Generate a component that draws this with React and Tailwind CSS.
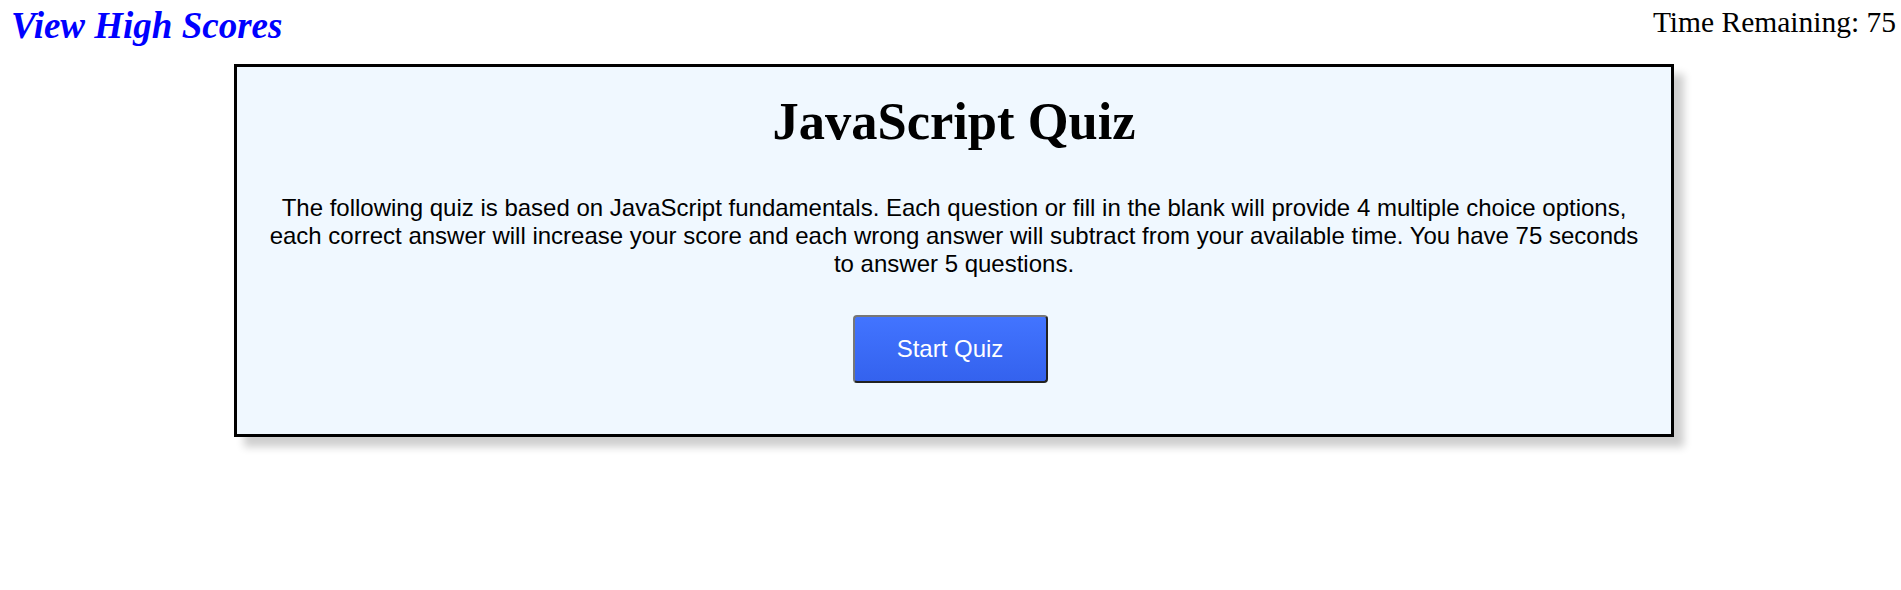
import React from 'react';

export default function App() {
    return (
        <div className="min-h-[590px] bg-white">
            <header className="flex items-start justify-between pl-[11px] pr-[5px] pt-[5px]">
                <a
                    href="#"
                    className="text-[37px] leading-[42px] font-bold italic text-[#0000ff]"
                    style={{ fontFamily: '"Liberation Serif", serif' }}
                >
                    View High Scores
                </a>
                <div
                    className="text-[29.5px] leading-[34px] text-black"
                    style={{ fontFamily: '"Liberation Serif", serif' }}
                >
                    Time Remaining: 75
                </div>
            </header>

            <main className="mt-[17px] flex justify-center">
                <section className="ml-[7px] w-[1440px] border-[3px] border-black bg-[#f0f8ff] pt-[22px] pb-[51px] shadow-[10px_10px_8px_#cfcfcf]">
                    <h1
                        className="text-center text-[52.5px] leading-[64px] font-bold text-black"
                        style={{ fontFamily: '"Liberation Serif", serif' }}
                    >
                        JavaScript Quiz
                    </h1>
                    <p
                        className="mt-[41px] px-[22px] text-center text-[24px] leading-[28px] text-black"
                        style={{ fontFamily: '"Liberation Sans", Arial, sans-serif' }}
                    >
                        The following quiz is based on JavaScript fundamentals. Each question or fill in the blank will provide 4 multiple choice options, each correct answer will increase your score and each wrong answer will subtract from your available time. You have 75 seconds to answer 5 questions.
                    </p>
                    <div className="mt-[37px] flex justify-center">
                        <button
                            className="mr-[8px] h-[68px] w-[195px] rounded-[4px] border-2 border-t-[#777777] border-l-[#777777] border-b-[#222222] border-r-[#222222] bg-gradient-to-b from-[#4274ff] to-[#3462ee] text-[24px] text-white"
                            style={{ fontFamily: '"Liberation Sans", Arial, sans-serif' }}
                        >
                            Start Quiz
                        </button>
                    </div>
                </section>
            </main>
        </div>
    );
}
